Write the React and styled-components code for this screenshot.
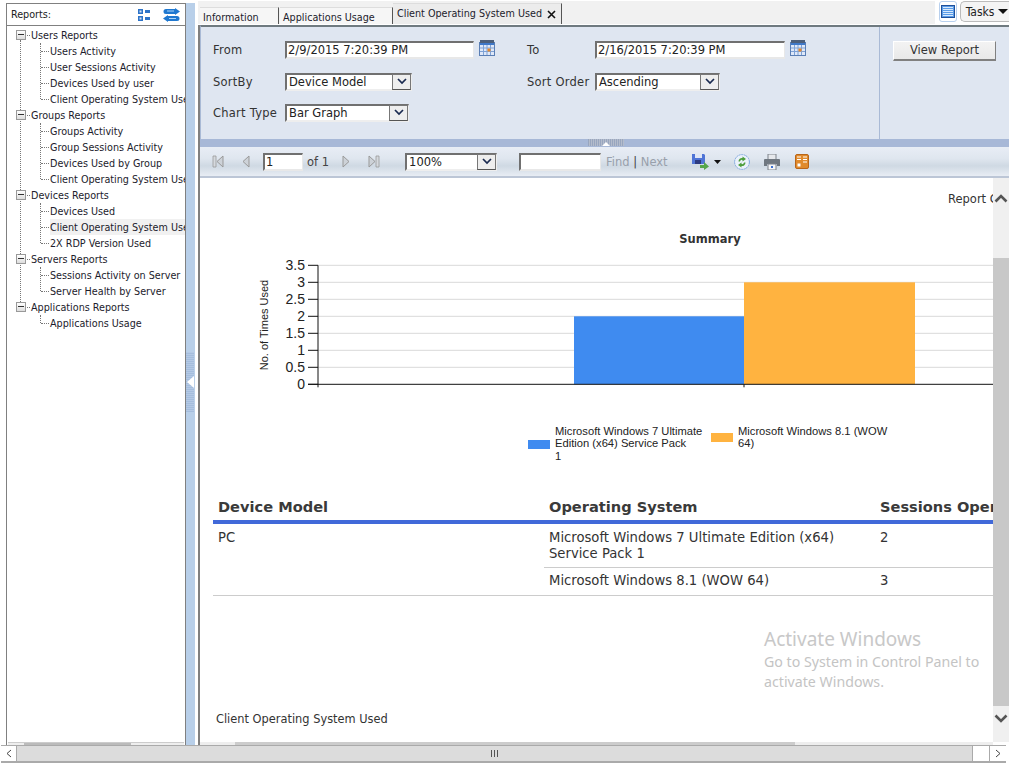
import React from "react";
import styled, { createGlobalStyle } from "styled-components";

const Global = createGlobalStyle`
  html, body { margin: 0; padding: 0; background: #fff; overflow: hidden; }
  * { box-sizing: border-box; }
`;
const Page = styled.div`
  width: 1009px; height: 764px; display: flex; flex-direction: column; overflow: hidden; position: relative;
  font-family: "DejaVu Sans", Verdana, sans-serif; color: #222; background: #fff;
`;
const Main = styled.div`display: flex; height: 745px; padding-top: 3px;`;
const Left = styled.aside`
  width: 180px; margin-left: 6px; border: 1px solid #808080; border-bottom: 0; border-top-width: 1px;
  display: flex; flex-direction: column; position: relative;
`;
const LeftHead = styled.div`
  height: 22px; border-bottom: 1px solid #808080; display: flex; align-items: center; padding: 0 5px 0 4px;
  font: 10.7px "DejaVu Sans Condensed", "DejaVu Sans", sans-serif; color: #222; justify-content: space-between;
`;
const HeadIcons = styled.div`display: flex; gap: 13px; align-items: center;`;
const Tree = styled.div`
  flex: 1; padding-top: 1px; overflow: hidden; position: relative;
  font: 10.7px "DejaVu Sans Condensed", "DejaVu Sans", sans-serif; color: #1c1c2c; white-space: nowrap;
  &::before { content: ""; position: absolute; left: 13px; top: 14px; height: 268px; border-left: 1px dotted #777; }
`;
const Group = styled.div`position: relative;
  &::before { content: ""; position: absolute; left: 33px; top: 16px; bottom: 8px; border-left: 1px dotted #777; }
`;
const GroupRow = styled.div`height: 16px; display: flex; align-items: center; padding-left: 9px; position: relative;`;
const Expander = styled.span`
  width: 10px; height: 10px; border: 1px solid #999; background: linear-gradient(#fff, #ddd); display: block; position: relative; z-index: 1;
  margin-right: 1px;
  &::after { content: ""; position: absolute; left: 1px; right: 1px; top: 3px; height: 2px; border-top: 1px solid #333; }
`;
const Dash = styled.span`width: 3px; border-top: 1px dotted #777; margin-right: 1px;`;
const Leaf = styled.div`
  height: 16px; display: flex; align-items: center; padding-left: 34px; position: relative; width: 178px; overflow: hidden;
  &::before { content: ""; width: 8px; border-top: 1px dotted #777; margin-right: 1px; flex: none; }
`;
const LeafText = styled.span`
  height: 16px; line-height: 18px; flex: 1; background: ${p => (p.$selected ? "#f1f1f1" : "transparent")};
`;
const TreeScroll = styled.div`
  height: 3px; margin: 0 1px; background: #eee; border-top: 1px solid #ccc; display: flex;
  &::before { content: ""; width: 16px; border-right: 1px solid #bbb; }
  &::after { content: ""; width: 106px; background: #bbb; }
`;
const Splitter = styled.div`
  width: 9px; background: #b8cfe9; display: flex; align-items: center; margin-right: 3px; 
`;
const SplitHandle = styled.div`
  width: 8px; height: 60px; margin-top: 16px; background: #a4bddd repeating-linear-gradient(0deg, #a4bddd 0 1px, #b4c9e5 1px 2px);
  display: flex; align-items: center;
`;
const Arrow = styled.div`
  width: 0; height: 0; border-style: solid; border-width: 6px 7px 6px 0; border-color: transparent #fff transparent transparent; margin-left: 1px;
`;
const Right = styled.section`flex: 1; min-width: 0; display: flex; flex-direction: column; border-left: 2px solid #808080; margin-top: 22px; position: relative;`;
const TabStrip = styled.div`
  position: absolute; left: -2px; top: -24px; right: 0; height: 23px; background: #f1f1f1; display: flex; align-items: flex-end; padding-left: 2px;
  font: 10.7px "DejaVu Sans Condensed", "DejaVu Sans", sans-serif;
`;
const Tab = styled.div`
  height: ${p => (p.$active ? "21px" : "17px")}; width: ${p => p.$w}px; margin-right: ${p => p.$mr || 0}px;
  padding: ${p => (p.$active ? "3px 5px 0 4px" : "3px 0 0 3px")}; white-space: nowrap; overflow: hidden;
  background: ${p => (p.$active ? "#ececec" : "#f6f6f6")}; border-right: 1px solid #555; border-top: 1px solid #ddd;
  display: flex; justify-content: space-between; line-height: 14px; align-items: flex-start; color: #1c1c2c;
`;
const TabTools = styled.div`
  position: absolute; top: -25px; right: 0; height: 24px; width: 74px; background: #fff; display: flex; align-items: flex-start; padding: 1px 0 0 4px; gap: 3px;
  font: 11px "DejaVu Sans Condensed", "DejaVu Sans", sans-serif;
`;
const ViewBtn = styled.div`width: 18px; height: 21px; border: 1px solid #b8d0ee; border-radius: 3px; display: flex; align-items: center; justify-content: center;`;
const TaskBtn = styled.div`
  width: 50px; height: 21px; border: 1px solid #bbb; border-right: 0; border-radius: 5px 0 0 5px; background: #f4f4f4; display: flex; align-items: center; padding-left: 5px; gap: 4px; font-size: 12px;
  &::after { content: ""; border-style: solid; border-width: 5px 5px 0; border-color: #111 transparent transparent; }
`;
const FormPanel = styled.div`
  height: 114px; border-top: 2px solid #6f7a80; border-bottom: 0; background: #dfe6f1; display: flex;
  font: 11.5px "DejaVu Sans", sans-serif; color: #333; border-left: 1px solid #a9bad6;
`;
const FormGrid = styled.div`
  width: 679px; border-right: 1px solid #a9bad6; padding: 7px 0 0 12px; display: grid;
  grid-template-columns: 72px 242px 68px 1fr; grid-template-rows: 32px 31px 31px; align-items: center;
`;
const Label = styled.div`white-space: nowrap; letter-spacing: .25px;`;
const Field = styled.div`display: flex; align-items: center; gap: 5px;`;
const TextBox = styled.div`
  width: ${p => p.$w}px; height: ${p => p.$h || 18}px; background: #fff; border-style: solid; border-width: 2px 1px 2px 2px; border-color: #707070 #e8e8e8 #e8e8e8 #707070;
  padding-left: 1px; font: 11.5px/14px "DejaVu Sans", sans-serif; color: #222; white-space: nowrap; overflow: hidden;
`;
const SelectBox = styled.div`
  width: ${p => p.$w}px; height: 18px; background: #fff; border-style: solid; border-width: 2px 1px 2px 2px; border-color: #707070 #eee #eee #707070;
  display: flex; justify-content: space-between; align-items: stretch; font: 11.5px/14px "DejaVu Sans", sans-serif; color: #222; padding-left: 2px;
`;
const Chevron = styled.div`
  width: 19px; background: #eee; border: 1px solid #777; border-bottom-color: #555; margin: -1px 0 -1px; display: flex; align-items: center; justify-content: center;
`;
const CalWrap = styled.div`margin-top: -4px; display: flex;`;
const SubmitCell = styled.div`flex: 1; padding: 14px 0 0 13px;`;
const ViewReport = styled.div`
  width: 103px; height: 20px; background: linear-gradient(#f3f3f3, #e9e9e9); border: 1px solid #fff; border-right: 1px solid #808080; border-bottom: 2px solid #808080;
  text-align: center; font: 11.5px/16px "DejaVu Sans", sans-serif; color: #333;
`;
const Collapse = styled.div`height: 8px; background: #a7b8d7; display: flex; justify-content: flex-start; padding-left: 388px;`;
const Grip = styled.div`width: 36px; height: 7px; background: #98a6bf repeating-linear-gradient(90deg, #98a6bf 0 1px, #b4bccb 1px 2px); display: flex; justify-content: center;
  &::after { content: ""; border-style: solid; border-width: 0 4px 4px; border-color: transparent transparent #fff; margin-top: 1px; }
`;
const Toolbar = styled.div`
  height: 31px; border-bottom: 2px solid #bcc6d6; background: linear-gradient(#e8edf5 0%, #dfe6ef 40%, #cfd9e3 65%, #e8edf4 100%);
  display: flex; align-items: center; padding-left: 12px; font: 11.5px "DejaVu Sans", sans-serif; color: #444;
`;
const PagerIcon = styled.svg`flex: none; margin-right: ${p => p.$mr}px; display: block;`;
const OfText = styled.span`margin: 0 13px 0 4px;`;
const FindLinks = styled.span`margin-right: 24px; white-space: nowrap;`;
const Disabled = styled.span`color: #98a0ab;`;
const ZoomSelect = styled(SelectBox)`margin-right: 22px;`;
const FindBox = styled(TextBox)`margin-right: 5px;`;
const ReportWrap = styled.div`flex: 1; min-height: 0; display: flex; position: relative; overflow: hidden;`;
const Report = styled.div`flex: 1; min-width: 0; overflow: hidden; background: #fff; position: relative; display: flex; flex-direction: column;`;
const ReportTop = styled.div`
  height: 42px; padding: 14px 0 0 748px; white-space: nowrap; font: 11.5px "DejaVu Sans", sans-serif; color: #333;
`;
const Chart = styled.svg`display: block; flex: none;`;
const DataTable = styled.div`
  width: 1000px; margin-left: 13px; font: 13.2px "DejaVu Sans", sans-serif; color: #333;
`;
const HeadRow = styled.div`display: grid; grid-template-columns: 331px 331px 1fr; height: 40px; border-bottom: 4px solid #4169d9; align-items: center; padding-top: 8px;`;
const HeadCell = styled.div`padding-left: 5px; font: bold 14.6px "DejaVu Sans", sans-serif; color: #3a3a3a; white-space: nowrap;`;
const Body = styled.div`display: grid; grid-template-columns: 331px 1fr; border-bottom: 1px solid #ccc;`;
const Cell = styled.div`padding: ${p => (p.$first ? "6px 5px 0" : "5px 5px 0")}; line-height: 16px;`;
const SubRow = styled.div`
  display: grid; grid-template-columns: 331px 1fr; border-bottom: ${p => (p.$last ? "0" : "1px solid #ccc")}; height: ${p => p.$h}px;
`;
const Footer = styled.div`margin-top: 116px; padding-left: 16px; font: 11.4px "DejaVu Sans", sans-serif; color: #333; white-space: nowrap;`;
const VScroll = styled.div`width: 16px; background: #f0f0f0; display: flex; flex-direction: column; align-items: center;`;
const VBtn = styled.div`height: ${p => p.$h}px; padding-top: ${p => p.$pt}px; display: flex; align-items: flex-start; justify-content: center; flex: none; width: 100%;`;
const VThumb = styled.div`flex: 1; width: 100%; background: #c8c8c8;`;
const HThin = styled.div`
  height: 3px; margin-right: 16px; background: #eee; display: flex; padding-left: 35px; flex: none;
  &::after { content: ""; width: 560px; background: #ccc; }
`;
const Watermark = styled.div`
  position: absolute; left: 564px; top: 449px; color: #c4c4c4; font: 14.2px/20px "Noto Sans", "Open Sans", sans-serif; width: 240px;
`;
const WatermarkTitle = styled.div`font-size: 19px; line-height: 25px; color: #c8c8c8;`;
const BottomBar = styled.div`
  height: 18px; margin: 0 3px 0 1px; display: flex; background: #dcdcdc; border-top: 1px solid #aaa; border-bottom: 2px solid #aaa; 
`;
const BarBtn = styled.div`width: ${p => p.$w || 16}px; background: #fff; border-right: ${p => (p.$noR ? 0 : 1)}px solid #aaa; display: flex; align-items: center; justify-content: center; flex: none;`;
const BarTrack = styled.div`flex: 1; display: flex; align-items: center; justify-content: center; border-right: 1px solid #aaa;
  &::after { content: ""; width: 7px; height: 7px; background: repeating-linear-gradient(90deg, #555 0 1px, transparent 1px 3px); }
`;
const CloseIcon = styled.svg`margin-top: 3px; flex: none;`;

const leftTree = [
  ["Users Reports", ["Users Activity", "User Sessions Activity", "Devices Used by user", "Client Operating System Used"]],
  ["Groups Reports", ["Groups Activity", "Group Sessions Activity", "Devices Used by Group", "Client Operating System Used"]],
  ["Devices Reports", ["Devices Used", "Client Operating System Used", "2X RDP Version Used"]],
  ["Servers Reports", ["Sessions Activity on Server", "Server Health by Server"]],
  ["Applications Reports", ["Applications Usage"]],
];

const Cal = () => (
  <CalWrap>
    <svg width="16" height="16" viewBox="0 0 16 16">
      <rect x="0.5" y="2.5" width="15" height="13" fill="#dfe8f8" stroke="#5b7fb5" />
      <rect x="1" y="0" width="14" height="3" fill="#4d5f7a" />
      <rect x="1" y="3" width="14" height="2" fill="#3f78c8" />
      <path d="M4.5 5v10M8 5v10M11.5 5v10M1 8h14M1 11.5h14" stroke="#7ea2d6" />
      <rect x="8.5" y="8.5" width="3" height="3" fill="#e88a2c" />
    </svg>
  </CalWrap>
);
const Down = () => (
  <svg width="10" height="7" viewBox="0 0 10 7"><path d="M1 1l4 4 4-4" fill="none" stroke="#1a2a50" strokeWidth="1.7" /></svg>
);
const First = () => (
  <PagerIcon $mr={18} width="12" height="13" viewBox="0 0 12 13">
    <path d="M1 1h3v11H1z" fill="#d5d9de" stroke="#999" strokeWidth=".8" />
    <path d="M11 1v11L5 6.5z" fill="#cdd2d8" stroke="#999" />
  </PagerIcon>
);
const Tri = ({ dir, mr }) => (
  <PagerIcon $mr={mr} width="8" height="13" viewBox="0 0 8 13">
    <path d={dir === "l" ? "M7 1v11L1 6.5z" : "M1 1v11l6-5.5z"} fill="#cdd2d8" stroke="#999" />
  </PagerIcon>
);
const Last = () => (
  <PagerIcon $mr={25} width="12" height="13" viewBox="0 0 12 13">
    <path d="M1 1v11l6-5.5z" fill="#cdd2d8" stroke="#999" />
    <path d="M8 1h3v11H8z" fill="#d5d9de" stroke="#999" strokeWidth=".8" />
  </PagerIcon>
);

const ticks = ["3.5", "3", "2.5", "2", "1.5", "1", "0.5", "0"];

const ChartView = () => {
  const T = i => 45.3 + i * 17;
  return (
    <Chart width="794" height="264" viewBox="1 0 794 264">
      <text x="511" y="23" textAnchor="middle" fontFamily="'DejaVu Sans', sans-serif" fontSize="11.5" fontWeight="bold" fill="#333">Summary</text>
      {ticks.map((t, i) => (
        <g key={t}>
          {i < 7 && <line x1="119" x2="795" y1={T(i)} y2={T(i)} stroke="#d9d9d9" />}
          <line x1="109" x2="119" y1={T(i)} y2={T(i)} stroke="#111" />
          <text x="106" y={T(i) + 5} textAnchor="end" fontFamily="'Liberation Sans', sans-serif" fontSize="14" fill="#222">{t}</text>
        </g>
      ))}
      <text transform="translate(69 105) rotate(-90)" textAnchor="middle" fontFamily="'Liberation Sans', sans-serif" fontSize="11" fill="#222">No. of Times Used</text>
      <rect x="375" y={T(3)} width="170.5" height={T(7) - T(3)} fill="#3f8bf0" />
      <rect x="545" y={T(1)} width="171" height={T(7) - T(1)} fill="#ffb340" />
      <line x1="119" x2="119" y1={T(0)} y2={T(7) + 3} stroke="#111" />
      <line x1="109" x2="795" y1={T(7)} y2={T(7)} stroke="#111" />
      <line x1="545" x2="545" y1={T(7)} y2={T(7) + 3} stroke="#111" />
      <rect x="329" y="220" width="22" height="9" fill="#3f8bf0" />
      <g fontFamily="'Liberation Sans', sans-serif" fontSize="11.2" fill="#222">
        <text x="356" y="215">Microsoft Windows 7 Ultimate</text>
        <text x="356" y="227">Edition (x64) Service Pack</text>
        <text x="356" y="240">1</text>
        <text x="539" y="215">Microsoft Windows 8.1 (WOW</text>
        <text x="539" y="227">64)</text>
      </g>
      <rect x="512" y="213" width="22" height="9" fill="#ffb340" />
    </Chart>
  );
};

export default function App() {
  return (
    <Page>
      <Global />
      <Main>
        <Left>
          <LeftHead>
            <span>Reports:</span>
            <HeadIcons>
              <svg width="12" height="12" viewBox="0 0 12 12">
                <path d="M0 0h5v5H0zM0 7h5v5H0z" fill="#2d73c8" />
                <path d="M7 1h5v3H7zM7 8h5v3H7z" fill="#2d73c8" />
                <path d="M1.5 1.5h2v2h-2zM1.5 8.5h2v2h-2z" fill="#cfe2fa" />
              </svg>
              <svg width="17" height="14" viewBox="0 0 17 14">
                <path d="M3 1h9V0l5 3.5L12 7V6H3a2 2 0 0 1 0-5z" fill="#1f78d0" />
                <path d="M14 8H5V7L0 10.5 5 14v-1h9a2.5 2.5 0 0 0 0-5z" fill="#1f78d0" />
                <path d="M4 3h7M6 10.5h7" stroke="#a8d3fa" />
              </svg>
            </HeadIcons>
          </LeftHead>
          <Tree>
            {leftTree.map(([g, items]) => (
              <Group key={g}>
                <GroupRow><Expander /><Dash />{g}</GroupRow>
                {items.map(i => (
                  <Leaf key={i}>
                    <LeafText $selected={g === "Devices Reports" && i.startsWith("Client")}>{i}</LeafText>
                  </Leaf>
                ))}
              </Group>
            ))}
          </Tree>
          <TreeScroll />
        </Left>
        <Splitter><SplitHandle><Arrow /></SplitHandle></Splitter>
        <Right>
          <TabStrip>
            <Tab $w={79} $mr={1}>Information</Tab>
            <Tab $w={113}>Applications Usage</Tab>
            <Tab $active $w={169}>
              <span>Client Operating System Used</span>
              <CloseIcon width="9" height="9" viewBox="0 0 9 9"><path d="M1 1l7 7M8 1L1 8" stroke="#111" strokeWidth="1.6" /></CloseIcon>
            </Tab>
          </TabStrip>
          <TabTools>
            <ViewBtn>
              <svg width="14" height="13" viewBox="0 0 14 13">
                <rect x=".5" y=".5" width="13" height="12" fill="#5a9ce8" stroke="#1f4f9a" />
                <path d="M2 2.5h10M2 4.5h10M2 6.5h10M2 8.5h10M2 10.5h10" stroke="#d8e9fc" />
              </svg>
            </ViewBtn>
            <TaskBtn>Tasks</TaskBtn>
          </TabTools>
          <FormPanel>
            <FormGrid>
              <Label>From</Label>
              <Field><TextBox $w={189}>2/9/2015 7:20:39 PM</TextBox><Cal /></Field>
              <Label>To</Label>
              <Field><TextBox $w={190}>2/16/2015 7:20:39 PM</TextBox><Cal /></Field>
              <Label>SortBy</Label>
              <Field><SelectBox $w={127}>Device Model<Chevron><Down /></Chevron></SelectBox></Field>
              <Label>Sort Order</Label>
              <Field><SelectBox $w={125}>Ascending<Chevron><Down /></Chevron></SelectBox></Field>
              <Label>Chart Type</Label>
              <Field><SelectBox $w={124}>Bar Graph<Chevron><Down /></Chevron></SelectBox></Field>
            </FormGrid>
            <SubmitCell><ViewReport>View Report</ViewReport></SubmitCell>
          </FormPanel>
          <Collapse><Grip /></Collapse>
          <Toolbar>
            <First />
            <Tri dir="l" mr={13} />
            <TextBox $w={40}>1</TextBox>
            <OfText>of 1</OfText>
            <Tri dir="r" mr={18} />
            <Last />
            <ZoomSelect $w={92}>100%<Chevron><Down /></Chevron></ZoomSelect>
            <FindBox $w={82} />
            <FindLinks><Disabled>Find</Disabled> | <Disabled>Next</Disabled></FindLinks>
            <PagerIcon $mr={5} width="17" height="17" viewBox="0 0 17 17">
              <path d="M0 1h12l1 1v9H0z" fill="#4f74d6" />
              <path d="M3 1h7v4H3z" fill="#dfe6f5" />
              <path d="M3 7h6v4H3z" fill="#2c3a80" />
              <path d="M8 12h4V9l5 4.5-5 3.5v-2H8z" fill="#55a64a" />
            </PagerIcon>
            <PagerIcon $mr={13} width="7" height="4" viewBox="0 0 7 4"><path d="M0 0h7L3.5 4z" fill="#111" /></PagerIcon>
            <PagerIcon $mr={14} width="16" height="16" viewBox="0 0 16 16">
              <circle cx="8" cy="8" r="7.4" fill="#eaf1fa" stroke="#7fa6dd" strokeDasharray="2 .6" />
              <path d="M4.5 7.5A3.5 3.5 0 0 1 8.5 4V2.5L12 5 8.5 7.5V6A2 2 0 0 0 6 7.5z" fill="#4d9e3c" />
              <path d="M11.5 8.5A3.5 3.5 0 0 1 7.5 12v1.5L4 11l3.5-2.5V10a2 2 0 0 0 2.5-1.5z" fill="#4d9e3c" />
            </PagerIcon>
            <PagerIcon $mr={15} width="16" height="16" viewBox="0 0 16 16">
              <path d="M4 0h8v6H4z" fill="#e6e8ec" stroke="#7c828a" />
              <path d="M1 5h14a1 1 0 0 1 1 1v6h-3v-2H3v2H0V6a1 1 0 0 1 1-1z" fill="#6f7780" />
              <path d="M4 10h8v6H4z" fill="#f4f5f8" stroke="#7c828a" />
              <rect x="7" y="12" width="2" height="2" fill="#3a6fd0" />
            </PagerIcon>
            <PagerIcon $mr={0} width="14" height="15" viewBox="0 0 14 15">
              <rect x=".5" y=".5" width="13" height="14" rx="1.5" fill="#e08a2c" stroke="#b8651a" />
              <path d="M8 3h4M8 5.5h4M8 8h4M2 3h4M2 5.5h4" stroke="#fff" strokeWidth="1.2" />
              <rect x="2.5" y="9.5" width="3" height="3" fill="#fff" />
            </PagerIcon>
          </Toolbar>
          <ReportWrap>
            <Report>
              <ReportTop>Report Generated</ReportTop>
              <ChartView />
              <DataTable>
                <HeadRow>
                  <HeadCell>Device Model</HeadCell>
                  <HeadCell>Operating System</HeadCell>
                  <HeadCell>Sessions Opened</HeadCell>
                </HeadRow>
                <Body>
                  <Cell $first>PC</Cell>
                  <div>
                    <SubRow $h={44}>
                      <Cell $first>Microsoft Windows 7 Ultimate Edition (x64)<br />Service Pack 1</Cell>
                      <Cell $first>2</Cell>
                    </SubRow>
                    <SubRow $h={27} $last>
                      <Cell>Microsoft Windows 8.1 (WOW 64)</Cell>
                      <Cell>3</Cell>
                    </SubRow>
                  </div>
                </Body>
              </DataTable>
              <Footer>Client Operating System Used</Footer>
              <Watermark>
                <WatermarkTitle>Activate Windows</WatermarkTitle>
                Go to System in Control Panel to<br />activate Windows.
              </Watermark>
            </Report>
            <VScroll>
              <VBtn $h={80} $pt={16}>
                <svg width="14" height="9" viewBox="0 0 14 9"><path d="M1.5 7.5L7 2l5.5 5.5" fill="none" stroke="#555" strokeWidth="2.6" /></svg>
              </VBtn>
              <VThumb />
              <VBtn $h={36} $pt={8}>
                <svg width="14" height="9" viewBox="0 0 14 9"><path d="M1.5 1.5L7 7l5.5-5.5" fill="none" stroke="#555" strokeWidth="2.6" /></svg>
              </VBtn>
            </VScroll>
          </ReportWrap>
          <HThin />
        </Right>
      </Main>
      <BottomBar>
        <BarBtn>
          <svg width="6" height="9" viewBox="0 0 6 9"><path d="M5 1L1 4.5 5 8" fill="none" stroke="#444" /></svg>
        </BarBtn>
        <BarTrack />
        <BarBtn $w={17} />
        <BarBtn $w={16} $noR>
          <svg width="6" height="9" viewBox="0 0 6 9"><path d="M1 1l4 3.5L1 8" fill="none" stroke="#444" /></svg>
        </BarBtn>
      </BottomBar>
    </Page>
  );
}
